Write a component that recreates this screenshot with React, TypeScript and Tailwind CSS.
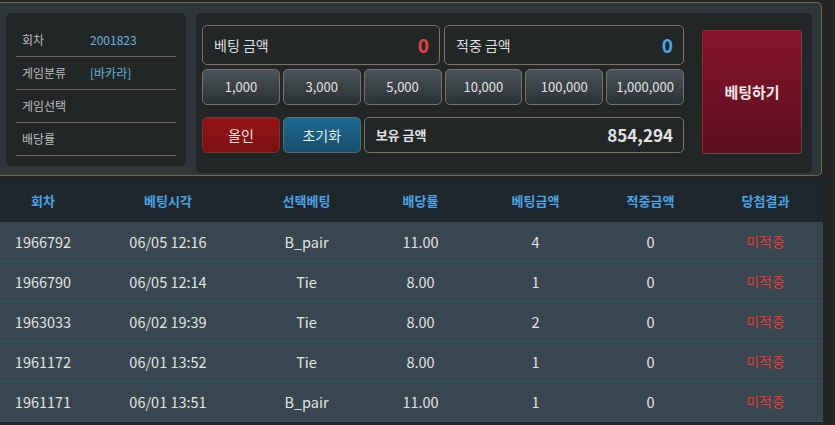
import React from "react";

const chips = ["1,000", "3,000", "5,000", "10,000", "100,000", "1,000,000"];

const info = [
  { label: "회차", value: "2001823" },
  { label: "게임분류", value: "[바카라]" },
  { label: "게임선택", value: "" },
  { label: "배당률", value: "" },
];

const rows = [
  ["1966792", "06/05 12:16", "B_pair", "11.00", "4", "0"],
  ["1966790", "06/05 12:14", "Tie", "8.00", "1", "0"],
  ["1963033", "06/02 19:39", "Tie", "8.00", "2", "0"],
  ["1961172", "06/01 13:52", "Tie", "8.00", "1", "0"],
  ["1961171", "06/01 13:51", "B_pair", "11.00", "1", "0"],
];

const heads = ["회차", "베팅시각", "선택베팅", "배당률", "베팅금액", "적중금액", "당첨결과"];

const cols = "grid grid-cols-[86px_164px_113px_115px_115px_115px_115px]";

export default function App() {
  return (
    <div className="w-[835px] h-[425px] overflow-hidden bg-[#232323] font-['Noto_Sans_CJK_KR','Noto_Sans',sans-serif]">
      {/* betting panel */}
      <div className="mt-[2px] w-[822px] h-[174px] bg-[#2f3739] border border-l-0 border-[#6f685c] rounded-r-[5px] flex gap-[10px] pl-[6px] pt-[10px]">
        <div className="w-[180px] h-[153px] bg-[#222627] rounded-[5px] pt-[11px]">
          {info.map((r) => (
            <div key={r.label} className="mx-[10px] h-[33px] border-b border-[#6f685c] flex items-center pl-[6px] text-[12px]">
              <span className="w-[68px] text-[#bdbdbd]">{r.label}</span>
              <span className="text-[#63b4dc]">{r.value}</span>
            </div>
          ))}
        </div>

        <div className="w-[616px] h-[160px] bg-[#222627] rounded-[5px] flex pl-[6px] pt-[12px]">
          <div className="w-[482px] flex flex-col">
            <div className="flex gap-[4px] h-[40px]">
              <div className="w-[238px] border border-[#7a7366] rounded-[5px] flex items-center justify-between pl-[11px] pr-[10px]">
                <span className="text-[14px] text-[#dedede]">베팅 금액</span>
                <span className="text-[19px] font-bold text-[#e84343]">0</span>
              </div>
              <div className="flex-1 border border-[#7a7366] rounded-[5px] flex items-center justify-between pl-[11px] pr-[10px]">
                <span className="text-[14px] text-[#dedede]">적중 금액</span>
                <span className="text-[19px] font-bold text-[#4fa6ea]">0</span>
              </div>
            </div>

            <div className="mt-[4px] grid grid-cols-6 gap-[3px] h-[36px]">
              {chips.map((c) => (
                <div key={c} className="border border-[#77706a] rounded-[5px] bg-gradient-to-b from-[#4a5358] to-[#2b3236] flex items-center justify-center text-[13px] text-[#e2e2e2]">
                  {c}
                </div>
              ))}
            </div>

            <div className="mt-[12px] grid grid-cols-6 gap-[3px] h-[36px]">
              <div className="border border-[#6a3a3a] rounded-[5px] bg-gradient-to-b from-[#971515] to-[#7c1010] flex items-center justify-center text-[14px] text-[#f0e0e0]">
                올인
              </div>
              <div className="border border-[#5a6a72] rounded-[5px] bg-gradient-to-b from-[#1e6a91] to-[#174f6c] flex items-center justify-center text-[14px] text-[#e6eef2]">
                초기화
              </div>
              <div className="col-span-4 border border-[#7a7366] rounded-[5px] flex items-center justify-between pl-[11px] pr-[10px]">
                <span className="text-[13px] font-bold text-[#e2e2e2]">보유 금액</span>
                <span className="text-[17px] font-bold text-[#e2e2e2]">854,294</span>
              </div>
            </div>
          </div>

          <div className="ml-[18px] mt-[5px] w-[100px] h-[124px] rounded-[4px] border border-[#b01a2e] border-r-[#6a4a50] border-b-[#6a4a50] bg-gradient-to-b from-[#86142b] to-[#5b0f1e] flex items-center justify-center text-[15px] font-bold text-[#f2e6e8]">
            베팅하기
          </div>
        </div>
      </div>

      {/* history table */}
      <div className="mt-[3px] w-[823px]">
        <div className={`${cols} h-[43px] bg-[#1f272e] items-center text-center text-[13px] font-bold text-[#4ba3e3]`}>
          {heads.map((h) => (
            <div key={h}>{h}</div>
          ))}
        </div>
        {rows.map((r) => (
          <div key={r[0]} className={`${cols} h-[40px] bg-[#37464f] border-b border-[#2b5470] items-center text-center text-[14.5px] text-[#e4e4e4]`}>
            {r.map((v, i) => (
              <div key={i}>{v}</div>
            ))}
            <div className="text-[14px] text-[#e23a3a]">미적중</div>
          </div>
        ))}
      </div>
    </div>
  );
}
